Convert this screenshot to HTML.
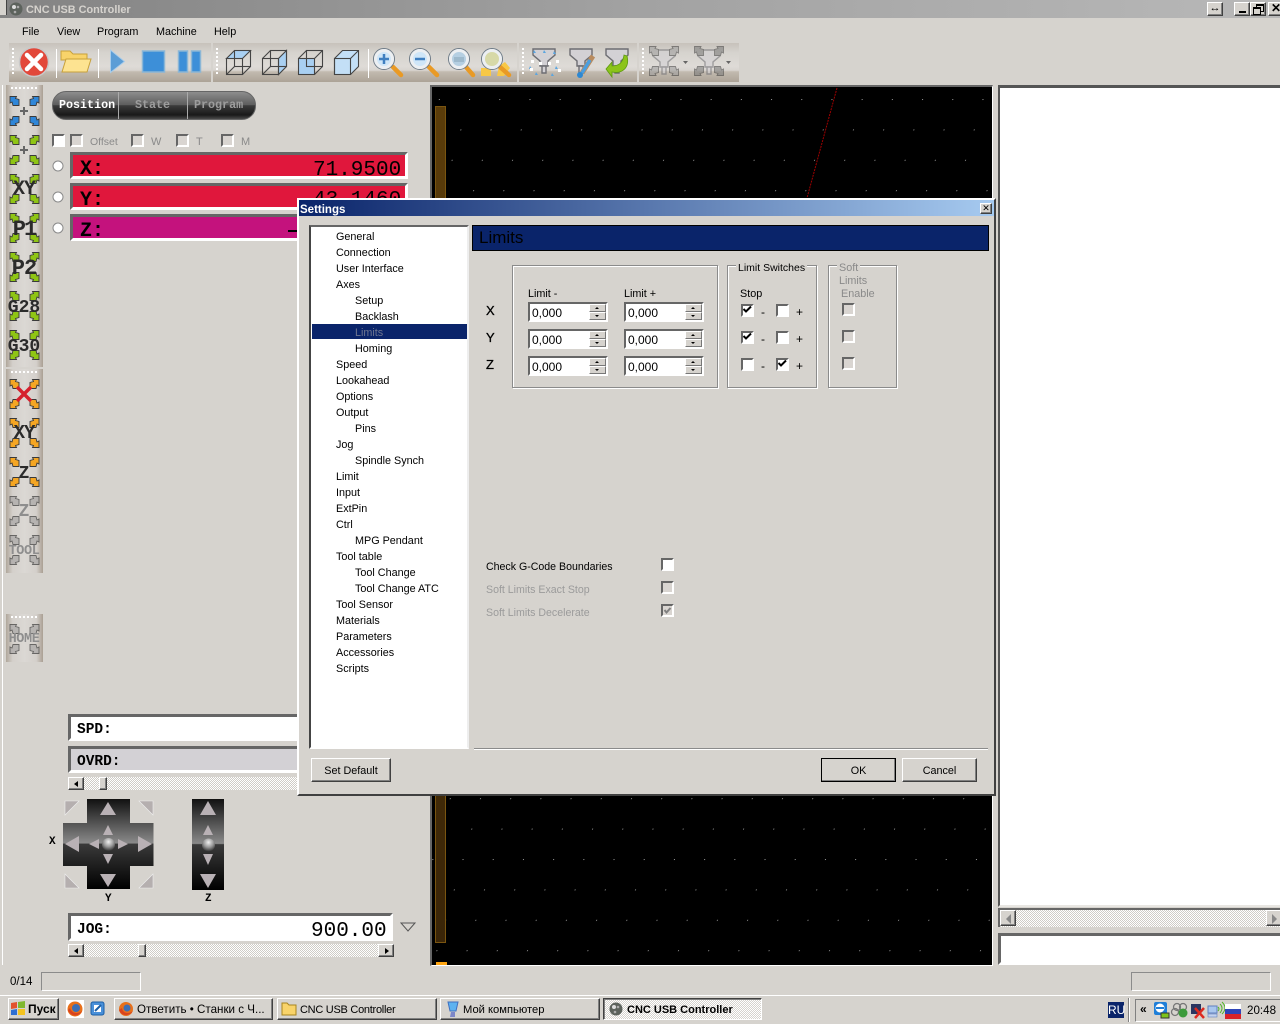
<!DOCTYPE html>
<html><head><meta charset="utf-8"><title>CNC USB Controller</title>
<style>
html,body{margin:0;padding:0}
body{width:1280px;height:1024px;overflow:hidden;position:relative;background:#d6d3ce;font:10.8px "Liberation Sans",sans-serif;color:#000}
div,span,svg{position:absolute}
.t{white-space:nowrap;line-height:14px}
.m{font-family:"Liberation Mono",monospace}
.b{font-weight:bold}
.g{color:#8a8a8a}
.w{left:0;top:1px}
.seg{background:linear-gradient(#c7c2bb 0,#d6d3ce 25%,#dedbd7 60%,#d8d4cf 70%,#c2baaf 74%,#aca397 100%)}
.vseg{background:linear-gradient(90deg,#b0a79b 0,#d4d0cb 18%,#dbd8d4 50%,#d4d0cb 82%,#aa9f93 100%)}
.ck{width:13px;height:13px;box-sizing:border-box;background:#fff;border:2px solid;border-color:#666 #fff #fff #666}
.ckd{background:#d9d5d1}
.fr{box-sizing:border-box;border:3px solid;border-color:#666 #fff #fff #666}
.sb{background:repeating-conic-gradient(#fff 0 25%,#cfccc6 0 50%) 0 0/2px 2px}
.btn{box-sizing:border-box;background:#d6d3ce;border:1px solid;border-color:#fff #404040 #404040 #fff;box-shadow:inset -1px -1px 0 #808080;text-align:center}
.gb{box-sizing:border-box;border:1px solid #8b8b8b;box-shadow:1px 1px 0 #fff,inset 1px 1px 0 #fff}
.sp{width:80px;height:20px;box-sizing:border-box;background:#fff;border:2px solid;border-color:#666 #fff #fff #666}
.sp i{position:absolute;right:0;width:15px;height:6px;background:#d6d3ce;border:1px solid;border-color:#fff #777 #777 #fff}
.sp i:before{content:"";position:absolute;left:5px;top:2px;border-left:2px solid transparent;border-right:2px solid transparent}
.sp i.u{top:0}.sp i.d{top:8px}
.sp i.u:before{border-bottom:2px solid #000}.sp i.d:before{border-top:2px solid #000}
.sp b{position:absolute;left:2px;top:2px;font-weight:normal;line-height:14px;font-size:12px}
.tb{box-sizing:border-box;height:22px;top:998px;background:#d6d3ce;border:1px solid;border-color:#fff #404040 #404040 #fff;box-shadow:inset -1px -1px 0 #808080}
</style></head><body>
<svg width="0" height="0" style="left:0;top:0"><defs>
<g id="arr"><path d="M.5 .5H7L6 2.500L9.500 3.500V9.500H3.500L2.500 6L.5 7Z"/></g>
<g id="ar4" stroke="#3a3a3a" stroke-width=".9"><use href="#arr" transform="translate(0 0)"/><use href="#arr" transform="translate(30 0) scale(-1 1)"/><use href="#arr" transform="translate(0 30) scale(1 -1)"/><use href="#arr" transform="translate(30 30) scale(-1 -1)"/></g>
<g id="tool" fill="#d3d1d5" stroke="#6d6d72" stroke-width="1.400"><path d="M0 0H22V6L15 12V17H7V12L0 6Z"/><path d="M9 17H13V24H9Z"/></g>
<pattern id="dots" width="30.2" height="30.4" patternUnits="userSpaceOnUse" patternTransform="translate(439 99) skewX(-16)"><rect width="1" height="1" fill="#9a9a9a"/></pattern>
<linearGradient id="jg" x1="0" y1="0" x2="0" y2="1"><stop offset="0" stop-color="#111"/><stop offset=".49" stop-color="#8a8a8a"/><stop offset=".5" stop-color="#3a3a3a"/><stop offset="1" stop-color="#000"/></linearGradient>
<linearGradient id="bar" x1="0" y1="0" x2="0" y2="1"><stop offset="0" stop-color="#5a3c0a"/><stop offset="1" stop-color="#3a2508"/></linearGradient>
<radialGradient id="ball" cx=".5" cy=".3" r=".75"><stop offset="0" stop-color="#f0f0f0"/><stop offset=".5" stop-color="#999"/><stop offset="1" stop-color="#222"/></radialGradient>
<g id="lens"><circle r="10.500" fill="none" stroke="#6f7c88" stroke-width="1"/><circle r="8.500" fill="none" stroke="#eceff2" stroke-width="3"/></g>
</defs></svg>

<!-- title bar -->
<div style="left:0;top:0;width:1280px;height:18px;background:linear-gradient(90deg,#838383,#a2a2a2 50%,#b8b8b8)"></div>
<div style="left:0;top:0;width:6px;height:15px;background:#d6d3ce;border-right:1px solid #444"></div>
<svg style="left:9px;top:2px" width="14" height="14"><circle cx="7" cy="7" r="6.500" fill="#5c625c"/><circle cx="5" cy="5" r="2" fill="#ddd"/><circle cx="9" cy="5" r="1.300" fill="#aaa"/><circle cx="6" cy="10" r="1.300" fill="#aaa"/></svg>
<div class="t b" style="left:26px;top:3px;color:#d6d3ce;font-size:10.900px">CNC USB Controller</div>
<div class="btn" style="left:1207px;top:2px;width:16px;height:14px;font-size:11px;line-height:11px">↔</div>
<div class="btn" style="left:1234px;top:2px;width:16px;height:14px"><div style="left:4px;top:8px;width:7px;height:2px;background:#000"></div></div>
<div class="btn" style="left:1250px;top:2px;width:16px;height:14px"><div style="left:5px;top:1px;width:6px;height:5px;border:1px solid #000;border-top-width:2px"></div><div style="left:2px;top:4px;width:6px;height:5px;border:1px solid #000;border-top-width:2px;background:#d6d3ce"></div></div>
<div class="btn" style="left:1268px;top:2px;width:16px;height:14px;font-size:12px;line-height:11px;font-weight:bold;text-align:left;padding-left:2px">✕</div>

<!-- menu -->
<div class="w">
<div class="t" style="left:22px;top:24px">File</div>
<div class="t" style="left:57px;top:24px">View</div>
<div class="t" style="left:97px;top:24px">Program</div>
<div class="t" style="left:156px;top:24px">Machine</div>
<div class="t" style="left:214px;top:24px">Help</div>
</div>

<!-- toolbars -->
<div class="seg" style="left:9px;top:43px;width:202px;height:39px"></div>
<div class="seg" style="left:213px;top:43px;width:304px;height:39px"></div>
<div class="seg" style="left:519px;top:43px;width:118px;height:39px"></div>
<div class="seg" style="left:639px;top:43px;width:100px;height:39px"></div>
<svg style="left:0;top:40px" width="760" height="45" viewBox="0 40 760 45">
<g fill="#fff"><path d="M12 48h2v2h-2zM12 52h2v2h-2zM12 56h2v2h-2zM12 60h2v2h-2zM12 64h2v2h-2zM12 68h2v2h-2zM12 72h2v2h-2z"/>
<path d="M216 48h2v2h-2zM216 52h2v2h-2zM216 56h2v2h-2zM216 60h2v2h-2zM216 64h2v2h-2zM216 68h2v2h-2zM216 72h2v2h-2z"/>
<path d="M522 48h2v2h-2zM522 52h2v2h-2zM522 56h2v2h-2zM522 60h2v2h-2zM522 64h2v2h-2zM522 68h2v2h-2zM522 72h2v2h-2z"/>
<path d="M642 48h2v2h-2zM642 52h2v2h-2zM642 56h2v2h-2zM642 60h2v2h-2zM642 64h2v2h-2zM642 68h2v2h-2zM642 72h2v2h-2z"/>
<rect x="56" y="49" width="1" height="29"/><rect x="98" y="49" width="1" height="29"/><rect x="368" y="49" width="1" height="29"/></g>
<circle cx="34" cy="62" r="14.500" fill="#e2483a" stroke="#c9c9c9" stroke-width="1.500"/>
<path d="M27 55 L41 69 M41 55 L27 69" stroke="#fff" stroke-width="4.500" stroke-linecap="round"/>
<path d="M61 51h9l3 3h14v6H61z" fill="#f8d36a" stroke="#c8a13a"/><path d="M62 72 L66 59H91L87 72Z" fill="#fde391" stroke="#c8a13a"/>
<path d="M110.500 50 L124.500 61.500 L110.500 72.500Z" fill="#5b9dd6" stroke="#a9cdeb"/>
<rect x="142.500" y="51" width="22" height="21" fill="#3d8fd8" stroke="#8ab6d6" stroke-width="1.500"/>
<rect x="178.500" y="51" width="9" height="21" fill="#3d8fd8" stroke="#8ab6d6" stroke-width="1.500"/>
<rect x="191.500" y="51" width="9" height="21" fill="#3d8fd8" stroke="#8ab6d6" stroke-width="1.500"/>
<g fill="none" stroke="#444" stroke-width="1.100">
<g transform="translate(226.500 50.500)"><path d="M0 8L8 0H24L16 8Z" fill="#a9d0f2"/><rect x="0" y="8" width="16" height="16"/><rect x="8" y="0" width="16" height="16"/><path d="M16 24L24 16M0 24L8 16"/></g>
<g transform="translate(262.500 50.500)"><path d="M16 8L24 0V16L16 24Z" fill="#a9d0f2"/><rect x="0" y="8" width="16" height="16"/><rect x="8" y="0" width="16" height="16"/><path d="M0 8L8 0M0 24L8 16"/></g>
<g transform="translate(298.500 50.500)"><rect x="0" y="8" width="16" height="16" fill="#a9d0f2"/><rect x="8" y="0" width="16" height="16"/><path d="M0 8L8 0M16 8L24 0M16 24L24 16"/></g>
<g transform="translate(334.500 50.500)"><path d="M0 8L8 0H24V16L16 24H0Z" fill="#c3dff6"/><rect x="0" y="8" width="16" height="16"/><path d="M16 8L24 0"/></g>
</g>
<path d="M393 67L401 75" stroke="#e99a25" stroke-width="4.500" stroke-linecap="round"/><circle cx="384" cy="59" r="9" fill="#cfe6f8"/><use href="#lens" x="384" y="59"/><path d="M379 59h10M384 54v10" stroke="#3f7fc0" stroke-width="2.500"/>
<path d="M429 67L437 75" stroke="#e99a25" stroke-width="4.500" stroke-linecap="round"/><circle cx="420" cy="59" r="9" fill="#cfe6f8"/><use href="#lens" x="420" y="59"/><path d="M415 59h10" stroke="#3f7fc0" stroke-width="2.500"/>
<path d="M466 67L473 75" stroke="#e99a25" stroke-width="4.500" stroke-linecap="round"/><circle cx="459" cy="59" r="9" fill="#b5cfe2"/><path d="M454 57h10v5h-10z" fill="#9db9cc"/><use href="#lens" x="459" y="59"/>
<path d="M481 68h10v8h-10zM499 66l6-4 5 6-6 8h-7z" fill="#f8c846"/><path d="M500 67L509 75" stroke="#e99a25" stroke-width="4.500" stroke-linecap="round"/><circle cx="492" cy="59" r="9" fill="#d7d9a8"/><use href="#lens" x="492" y="59"/>
<use href="#tool" x="533" y="49"/>
<g fill="#5aa5e0"><path d="M534 50l2 3h-3zM544 50l2 3h-3zM554 51l2 3h-3zM530 66l2 3h-3zM536 72l2 3h-3zM556 66l2 3h-3zM552 73l2 3h-3z"/></g>
<g fill="#fff"><rect x="531" y="60" width="3" height="3"/><rect x="556" y="60" width="3" height="3"/><rect x="539" y="62" width="3" height="3"/><rect x="548" y="62" width="3" height="3"/><rect x="530" y="68" width="3" height="3"/><rect x="558" y="69" width="3" height="3"/></g>
<use href="#tool" x="570" y="49"/>
<path d="M582 73L593 56" stroke="#b98b5e" stroke-width="5"/><path d="M582 73L590 60" stroke="#4a9ee0" stroke-width="3.500"/><circle cx="580" cy="75" r="3" fill="#2d88d2"/>
<use href="#tool" x="606" y="49"/>
<path d="M627 56C630 68 622 74 612 72V77L606 69L612 62V66C618 66 623 63 624 55Z" fill="#8cc41a" stroke="#5d9a10" stroke-width=".8"/>
<g opacity=".55"><use href="#tool" x="653" y="50"/><use href="#ar4" x="649" y="46" fill="#9c9c9c"/>
<use href="#tool" x="698" y="50"/><use href="#ar4" x="694" y="46" fill="#777"/></g>
<path d="M683 61h5l-2.500 3zM726 61h5l-2.500 3z" fill="#666"/>
</svg>

<!-- vertical toolbars -->
<div class="vseg" style="left:6px;top:85px;width:37px;height:282px"></div>
<div class="vseg" style="left:6px;top:369px;width:37px;height:204px"></div>
<div class="vseg" style="left:6px;top:614px;width:37px;height:48px"></div>
<svg style="left:0;top:85px" width="50" height="580" viewBox="0 85 50 580">
<g fill="#fff"><path d="M11 87h2v2h-2zM15 87h2v2h-2zM19 87h2v2h-2zM23 87h2v2h-2zM27 87h2v2h-2zM31 87h2v2h-2zM35 87h2v2h-2z"/><path d="M11 371h2v2h-2zM15 371h2v2h-2zM19 371h2v2h-2zM23 371h2v2h-2zM27 371h2v2h-2zM31 371h2v2h-2zM35 371h2v2h-2z"/><path d="M11 616h2v2h-2zM15 616h2v2h-2zM19 616h2v2h-2zM23 616h2v2h-2zM27 616h2v2h-2zM31 616h2v2h-2zM35 616h2v2h-2z"/></g>
<use href="#ar4" x="9.500" y="96" fill="#2f86d8"/>
<use href="#ar4" x="9.500" y="135" fill="#8fc514"/>
<use href="#ar4" x="9.500" y="174" fill="#8fc514"/>
<use href="#ar4" x="9.500" y="213" fill="#8fc514"/>
<use href="#ar4" x="9.500" y="252" fill="#8fc514"/>
<use href="#ar4" x="9.500" y="291" fill="#8fc514"/>
<use href="#ar4" x="9.500" y="330" fill="#8fc514"/>
<use href="#ar4" x="9.500" y="379" fill="#f5a623"/>
<use href="#ar4" x="9.500" y="418" fill="#f5a623"/>
<use href="#ar4" x="9.500" y="457" fill="#f5a623"/>
<use href="#ar4" x="9.500" y="496" fill="#a9a7a6" opacity=".7"/>
<use href="#ar4" x="9.500" y="535" fill="#a9a7a6" opacity=".7"/>
<use href="#ar4" x="9.500" y="624" fill="#a9a7a6" opacity=".7"/>
<path d="M20 111h8M24 107v8M20 150h8M24 146v8" stroke="#666" stroke-width="2"/>
<path d="M17 387L31 401M31 387L17 401" stroke="#d5202c" stroke-width="3.500"/>
<g font-family="Liberation Mono,monospace" font-weight="bold" text-anchor="middle" fill="#2b2b2b">
<text x="24" y="194" font-size="20" letter-spacing="-1">XY</text>
<text x="24" y="235" font-size="22" letter-spacing="-2">P1</text>
<text x="24" y="274" font-size="22" letter-spacing="-1">P2</text>
<text x="24" y="312" font-size="18">G28</text>
<text x="24" y="351" font-size="18">G30</text>
<text x="24" y="438" font-size="19" letter-spacing="-1">XY</text>
<text x="24" y="478" font-size="18">Z</text>
<text x="24" y="516" font-size="18" fill="#8e8e8e">Z</text>
<text x="24" y="554" font-size="13.500" fill="#8e8e8e" letter-spacing="-.4">TOOL</text>
<text x="24" y="642" font-size="13.500" fill="#8e8e8e" letter-spacing="-.4">HOME</text>
</g></svg>

<div style="left:2px;top:85px;width:1px;height:880px;background:#fff"></div>

<!-- tabs -->
<div style="left:52px;top:91px;width:204px;height:29px;box-sizing:border-box;border-radius:14px;border:1px solid #666;background:linear-gradient(#8d8d8d 0,#5d5d5d 48%,#3b3b3b 50%,#191919 85%,#4a4a4a 100%)"></div>
<div style="left:118px;top:92px;width:1px;height:27px;background:#aaa"></div>
<div style="left:187px;top:92px;width:1px;height:27px;background:#aaa"></div>
<div class="t m b" style="left:59px;top:98px;font-size:11.700px;color:#fff">Position</div>
<div class="t m b" style="left:135px;top:98px;font-size:11.700px;color:#9d9d9d">State</div>
<div class="t m b" style="left:194px;top:98px;font-size:11.700px;color:#9d9d9d">Program</div>

<!-- option row -->
<div class="ck" style="left:52px;top:134px"></div>
<div class="ck ckd" style="left:70px;top:134px"></div><div class="t g" style="left:90px;top:135px;font-size:10.500px">Offset</div>
<div class="ck ckd" style="left:131px;top:134px"></div><div class="t g" style="left:151px;top:135px;font-size:11px">W</div>
<div class="ck ckd" style="left:176px;top:134px"></div><div class="t g" style="left:196px;top:135px;font-size:11px">T</div>
<div class="ck ckd" style="left:221px;top:134px"></div><div class="t g" style="left:241px;top:135px;font-size:11px">M</div>

<!-- radios -->
<svg style="left:50px;top:155px" width="16" height="85"><g fill="#fff" stroke="#8a8a8a"><circle cx="8" cy="11" r="5"/><circle cx="8" cy="42" r="5"/><circle cx="8" cy="73" r="5"/></g></svg>

<!-- DRO -->
<div class="fr" style="left:70px;top:152px;width:338px;height:27px;background:#e0173c"></div>
<div class="t m b" style="left:80px;top:163px;font-size:20px">X:</div>
<div class="t m" style="left:313px;top:164px;font-size:21px">71.9500</div>
<div class="fr" style="left:70px;top:183px;width:338px;height:27px;background:#e0173c"></div>
<div class="t m b" style="left:80px;top:194px;font-size:20px">Y:</div>
<div class="t m" style="left:313px;top:194px;font-size:21px">43.1460</div>
<div class="fr" style="left:70px;top:214px;width:338px;height:27px;background:#c4127d"></div>
<div class="t m b" style="left:80px;top:225px;font-size:20px">Z:</div>
<div style="left:288px;top:230px;width:9px;height:2px;background:#000"></div>

<!-- SPD, OVRD -->
<div class="fr" style="left:68px;top:714px;width:240px;height:27px;background:#fff"></div>
<div class="t m b" style="left:77px;top:723px;font-size:14.500px">SPD:</div>
<div class="fr" style="left:68px;top:746px;width:240px;height:27px;background:#d3d1d5"></div>
<div class="t m b" style="left:77px;top:755px;font-size:14.500px">OVRD:</div>
<div class="sb" style="left:68px;top:777px;width:240px;height:13px"></div>
<div class="btn" style="left:68px;top:777px;width:16px;height:13px"><div style="left:5px;top:3px;border-right:4px solid #000;border-top:3px solid transparent;border-bottom:3px solid transparent"></div></div>
<div class="btn" style="left:99px;top:777px;width:8px;height:13px"></div>

<!-- jog pads -->
<svg style="left:60px;top:796px" width="170" height="98" viewBox="60 796 170 98">
<path d="M87 799H130V823H153.500V866H130V889H87V866H63V823H87Z" fill="url(#jg)"/>
<rect x="192" y="799" width="32" height="91" fill="url(#jg)"/>
<g fill="#b9b1b5">
<path d="M108 802L116 815H100ZM108 887L116 874H100ZM65 844L79 836V852ZM152 844L138 836V852Z"/>
<path d="M108 825L113 835H103ZM108 864L113 854H103ZM89 844L99 839V849ZM128 844L118 839V849Z"/>
<path d="M208 801L216 815H200ZM208 825L213 835H203ZM208 888L216 874H200ZM208 865L213 854H203Z"/>
</g>
<circle cx="108.500" cy="844.500" r="6.500" fill="url(#ball)"/><circle cx="208.500" cy="845" r="6.500" fill="url(#ball)"/>
<g fill="#b5afaf" stroke="#eee" stroke-width=".6"><path d="M65 801H79L65 815ZM153 801H139L153 815ZM65 888H79L65 874ZM153 888H139L153 874Z"/></g>
</svg>
<div class="t m b" style="left:49px;top:835px;font-size:11px">X</div>
<div class="t m b" style="left:105px;top:892px;font-size:11px">Y</div>
<div class="t m b" style="left:205px;top:892px;font-size:11px">Z</div>

<!-- JOG -->
<div class="fr" style="left:68px;top:913px;width:325px;height:28px;background:#fff"></div>
<div class="t m b" style="left:77px;top:923px;font-size:14.500px">JOG:</div>
<div class="t m" style="left:311px;top:925px;font-size:21px">900.00</div>
<svg style="left:400px;top:922px" width="16" height="11"><path d="M1 1H15L8 9Z" fill="#d6d3ce" stroke="#555"/></svg>
<div class="sb" style="left:68px;top:944px;width:326px;height:13px"></div>
<div class="btn" style="left:68px;top:944px;width:16px;height:13px"><div style="left:5px;top:3px;border-right:4px solid #000;border-top:3px solid transparent;border-bottom:3px solid transparent"></div></div>
<div class="btn" style="left:138px;top:944px;width:8px;height:13px"></div>
<div class="btn" style="left:378px;top:944px;width:16px;height:13px"><div style="left:6px;top:3px;border-left:4px solid #000;border-top:3px solid transparent;border-bottom:3px solid transparent"></div></div>

<!-- canvas -->
<div style="left:430px;top:85px;width:563px;height:881px;box-sizing:border-box;background:#000;border-style:solid;border-width:2px 1px 1px 2px;border-color:#666 #fff #fff #666"></div>
<svg style="left:432px;top:87px" width="560" height="878" viewBox="432 87 560 878">
<rect x="432" y="87" width="560" height="878" fill="url(#dots)"/>
<rect x="435.500" y="106.500" width="10" height="836" fill="url(#bar)" stroke="#7a5510"/>
<rect x="436" y="962" width="11" height="3" fill="#ffa511"/>
<path d="M837 88L807 198" stroke="#a00000" stroke-width="1" stroke-dasharray="2 1"/>
</svg>

<!-- right panel -->
<div style="left:998px;top:85px;width:282px;height:822px;box-sizing:border-box;background:#fff;border-style:solid;border-width:3px 0 2px 2px;border-color:#555 #fff #e8e6e2 #555"></div>
<div style="left:998px;top:908px;width:282px;height:19px;box-sizing:border-box;border-top:2px solid #666;border-left:2px solid #666"></div>
<div class="sb" style="left:1000px;top:910px;width:280px;height:17px"></div>
<div class="btn" style="left:1000px;top:910px;width:16px;height:16px"><div style="left:5px;top:3px;border-right:5px solid #888;border-top:5px solid transparent;border-bottom:5px solid transparent"></div></div>
<div class="btn" style="left:1266px;top:910px;width:16px;height:16px"><div style="left:5px;top:3px;border-left:5px solid #888;border-top:5px solid transparent;border-bottom:5px solid transparent"></div></div>
<div class="fr" style="left:998px;top:933px;width:285px;height:32px;background:#fff"></div>

<!-- dialog -->
<div style="left:297px;top:198px;width:699px;height:598px;box-sizing:border-box;background:#d6d3ce;border:2px solid;border-color:#fff #404040 #404040 #fff"></div>
<div style="left:299px;top:200px;width:695px;height:16px;background:linear-gradient(90deg,#0a246a,#a6caf0)"></div>
<div class="t b" style="left:300px;top:203px;color:#fff;font-size:11.500px">Settings</div>
<div class="btn" style="left:980px;top:203px;width:12px;height:11px;font-size:9px;line-height:8px">✕</div>

<!-- tree -->
<div style="left:309px;top:225px;width:160px;height:524px;box-sizing:border-box;background:#fff;border:2px solid;border-color:#666 #eee #fff #444"></div>
<div style="left:312px;top:324px;width:155px;height:15px;background:#0a246a"></div>
<div class="w">
<div class="t" style="left:336px;top:229px">General</div>
<div class="t" style="left:336px;top:245px">Connection</div>
<div class="t" style="left:336px;top:261px">User Interface</div>
<div class="t" style="left:336px;top:277px">Axes</div>
<div class="t" style="left:355px;top:293px">Setup</div>
<div class="t" style="left:355px;top:309px">Backlash</div>
<div class="t" style="left:355px;top:325px;color:#6e7590">Limits</div>
<div class="t" style="left:355px;top:341px">Homing</div>
<div class="t" style="left:336px;top:357px">Speed</div>
<div class="t" style="left:336px;top:373px">Lookahead</div>
<div class="t" style="left:336px;top:389px">Options</div>
<div class="t" style="left:336px;top:405px">Output</div>
<div class="t" style="left:355px;top:421px">Pins</div>
<div class="t" style="left:336px;top:437px">Jog</div>
<div class="t" style="left:355px;top:453px">Spindle Synch</div>
<div class="t" style="left:336px;top:469px">Limit</div>
<div class="t" style="left:336px;top:485px">Input</div>
<div class="t" style="left:336px;top:501px">ExtPin</div>
<div class="t" style="left:336px;top:517px">Ctrl</div>
<div class="t" style="left:355px;top:533px">MPG Pendant</div>
<div class="t" style="left:336px;top:549px">Tool table</div>
<div class="t" style="left:355px;top:565px">Tool Change</div>
<div class="t" style="left:355px;top:581px">Tool Change ATC</div>
<div class="t" style="left:336px;top:597px">Tool Sensor</div>
<div class="t" style="left:336px;top:613px">Materials</div>
<div class="t" style="left:336px;top:629px">Parameters</div>
<div class="t" style="left:336px;top:645px">Accessories</div>
<div class="t" style="left:336px;top:661px">Scripts</div>
</div>

<!-- header -->
<div style="left:472px;top:225px;width:517px;height:26px;box-sizing:border-box;background:#0a246a;border:1px solid #000"></div>
<div class="t" style="left:479px;top:230px;font-size:17px;line-height:16px;color:#000">Limits</div>

<!-- groups -->
<div class="gb" style="left:512px;top:265px;width:206px;height:123px"></div>
<div class="gb" style="left:727px;top:265px;width:90px;height:123px"></div>
<div class="gb" style="left:828px;top:265px;width:69px;height:123px"></div>
<div class="w">
<div class="t" style="left:736px;top:260px;background:#d6d3ce;padding:0 2px;font-size:10.500px">Limit Switches</div>
<div class="t g" style="left:837px;top:260px;background:#d6d3ce;padding:0 2px">Soft</div>
<div class="t g" style="left:839px;top:273px">Limits</div>
<div class="t g" style="left:841px;top:286px">Enable</div>
<div class="t" style="left:528px;top:286px">Limit -</div>
<div class="t" style="left:624px;top:286px">Limit +</div>
<div class="t" style="left:740px;top:286px">Stop</div>
</div>
<div class="t" style="left:486px;top:304px;font-size:13px;-webkit-text-stroke:.3px #000">X</div>
<div class="t" style="left:486px;top:331px;font-size:13px;-webkit-text-stroke:.3px #000">Y</div>
<div class="t" style="left:486px;top:358px;font-size:13px;-webkit-text-stroke:.3px #000">Z</div>

<div class="sp" style="left:528px;top:302px"><b>0,000</b><i class="u"></i><i class="d"></i></div>
<div class="sp" style="left:624px;top:302px"><b>0,000</b><i class="u"></i><i class="d"></i></div>
<div class="sp" style="left:528px;top:329px"><b>0,000</b><i class="u"></i><i class="d"></i></div>
<div class="sp" style="left:624px;top:329px"><b>0,000</b><i class="u"></i><i class="d"></i></div>
<div class="sp" style="left:528px;top:356px"><b>0,000</b><i class="u"></i><i class="d"></i></div>
<div class="sp" style="left:624px;top:356px"><b>0,000</b><i class="u"></i><i class="d"></i></div>

<div class="ck" style="left:741px;top:304px"></div><div class="ck" style="left:776px;top:304px"></div>
<div class="ck" style="left:741px;top:331px"></div><div class="ck" style="left:776px;top:331px"></div>
<div class="ck" style="left:741px;top:358px"></div><div class="ck" style="left:776px;top:358px"></div>
<div class="ck ckd" style="left:842px;top:303px"></div>
<div class="ck ckd" style="left:842px;top:330px"></div>
<div class="ck ckd" style="left:842px;top:357px"></div>
<svg style="left:735px;top:300px" width="60" height="70"><g fill="none" stroke="#000" stroke-width="2"><path d="M8.500 9L11 11.500L16 6.500"/><path d="M8.500 36L11 38.500L16 33.500"/><path d="M43.500 63L46 65.500L51 60.500"/></g></svg>
<div class="t" style="left:761px;top:305px;font-size:12px">-</div><div class="t" style="left:796px;top:305px;font-size:12px">+</div>
<div class="t" style="left:761px;top:332px;font-size:12px">-</div><div class="t" style="left:796px;top:332px;font-size:12px">+</div>
<div class="t" style="left:761px;top:359px;font-size:12px">-</div><div class="t" style="left:796px;top:359px;font-size:12px">+</div>

<div class="w">
<div class="t" style="left:486px;top:559px;font-size:10.600px">Check G-Code Boundaries</div>
<div class="t g" style="left:486px;top:582px;color:#9b9b9b;font-size:10.600px">Soft Limits Exact Stop</div>
<div class="t g" style="left:486px;top:605px;color:#9b9b9b;font-size:10.600px">Soft Limits Decelerate</div>
</div>
<div class="ck" style="left:661px;top:558px"></div>
<div class="ck ckd" style="left:661px;top:581px"></div>
<div class="ck ckd" style="left:661px;top:604px"></div>
<svg style="left:661px;top:604px" width="13" height="13"><path d="M3.500 6L5.500 8.500L9.500 4" fill="none" stroke="#808080" stroke-width="2"/></svg>

<!-- dialog bottom -->
<div style="left:474px;top:748px;width:514px;height:1px;background:#8b8b8b;box-shadow:0 1px 0 #fff"></div>
<div class="btn t" style="left:311px;top:758px;width:80px;height:24px;line-height:25px">Set Default</div>
<div class="btn t" style="left:821px;top:758px;width:75px;height:24px;line-height:25px;outline:1px solid #000;outline-offset:-1px">OK</div>
<div class="btn t" style="left:902px;top:758px;width:75px;height:24px;line-height:25px">Cancel</div>

<!-- status -->
<div class="t" style="left:10px;top:975px;font-size:11.500px">0/14</div>
<div style="left:41px;top:972px;width:100px;height:19px;box-sizing:border-box;border:1px solid;border-color:#8b8b8b #fff #fff #8b8b8b"></div>
<div style="left:1131px;top:972px;width:140px;height:19px;box-sizing:border-box;border:1px solid;border-color:#8b8b8b #fff #fff #8b8b8b"></div>

<!-- taskbar -->
<div style="left:0;top:995px;width:1280px;height:1px;background:#fff"></div>
<div class="tb" style="left:8px;width:51px"></div>
<svg style="left:10px;top:1001px" width="16" height="15"><path d="M1 2L7 1V7L1 8Z" fill="#e2522c"/><path d="M8 1L15 0V7L8 7Z" fill="#7fb82f"/><path d="M1 9L7 8V14L1 14Z" fill="#2f6fd2"/><path d="M8 8H15V14L8 14Z" fill="#f3c21f"/></svg>
<div class="t b" style="left:28px;top:1002px;font-size:12px">Пуск</div>
<svg style="left:66px;top:1000px" width="18" height="18"><rect width="18" height="18" fill="#fff"/><circle cx="9" cy="9" r="7.500" fill="#e8701a"/><circle cx="10" cy="8" r="4" fill="#3d6fb5"/><path d="M2 10C4 16 12 18 16 11C12 14 6 14 4 8Z" fill="#d9431e"/></svg>
<svg style="left:89px;top:1000px" width="17" height="17"><rect x="2" y="2" width="13" height="13" rx="2" fill="#4a90d9" stroke="#1b5fa6"/><path d="M5 5h7v7H5z" fill="#fff"/><path d="M6 11L12 5" stroke="#1b5fa6" stroke-width="2"/></svg>
<div class="tb" style="left:114px;width:159px"></div>
<svg style="left:118px;top:1001px" width="16" height="16"><circle cx="8" cy="8" r="7" fill="#e8701a"/><circle cx="9" cy="7" r="3.500" fill="#3d6fb5"/><path d="M1 9C3 15 11 16 15 10C11 13 5 13 4 7Z" fill="#d9431e"/></svg>
<div class="t" style="left:137px;top:1003px;font-size:11.600px">Ответить • Станки с Ч...</div>
<div class="tb" style="left:277px;width:160px"></div>
<svg style="left:281px;top:1002px" width="16" height="14"><path d="M1 1h5l2 2h7v10H1z" fill="#f8d36a" stroke="#a8851f"/></svg>
<div class="t" style="left:300px;top:1003px;font-size:11px;letter-spacing:-.27px">CNC USB Controller</div>
<div class="tb" style="left:440px;width:160px"></div>
<svg style="left:446px;top:1001px" width="14" height="17"><path d="M2 1H12L10 10H4Z" fill="#5db2f0" stroke="#3f6fc0"/><path d="M5 11H9V16H4Z" fill="#7c86c8"/></svg>
<div class="t" style="left:463px;top:1003px;font-size:11.200px">Мой компьютер</div>
<div class="tb" style="left:603px;width:159px;border-color:#404040 #fff #fff #404040;box-shadow:inset 1px 1px 0 #808080;background:repeating-conic-gradient(#fff 0 25%,#d6d3ce 0 50%) 0 0/2px 2px"></div>
<svg style="left:609px;top:1002px" width="14" height="14"><circle cx="7" cy="7" r="6.500" fill="#5c625c"/><circle cx="5" cy="5" r="2" fill="#ddd"/><circle cx="9" cy="5" r="1.300" fill="#aaa"/><circle cx="6" cy="10" r="1.300" fill="#aaa"/></svg>
<div class="t b" style="left:627px;top:1003px;font-size:11px">CNC USB Controller</div>

<!-- tray -->
<div class="t" style="left:1108px;top:1002px;width:16px;height:16px;background:#0a246a;color:#fff;text-align:center;line-height:16px;font-size:12px">RU</div>
<div style="left:1128px;top:998px;width:1px;height:24px;background:#808080;box-shadow:1px 0 0 #fff"></div>
<div style="left:1135px;top:999px;width:146px;height:23px;box-sizing:border-box;border:1px solid;border-color:#808080 #d6d3ce #fff #808080"></div>
<div class="t b" style="left:1140px;top:1002px;font-size:12px">«</div>
<svg style="left:1153px;top:1001px" width="90" height="18">
<rect x="1" y="1" width="13" height="13" rx="2" fill="#1f7fd8"/><circle cx="7" cy="7" r="4.500" fill="#fff"/><path d="M3 7h8" stroke="#1f7fd8" stroke-width="2"/><rect x="8" y="12" width="8" height="5" fill="#7dc31b" stroke="#333"/>
<g fill="none" stroke="#777" stroke-width="1.300"><circle cx="24" cy="6" r="3.500"/><circle cx="30" cy="6" r="3.500"/><circle cx="22" cy="11" r="3.500"/></g><circle cx="30" cy="12" r="4.500" fill="#3c9a3a"/>
<rect x="38" y="3" width="10" height="10" fill="#2a3560"/><path d="M42 7L51 17M51 7L42 17" stroke="#dd2a20" stroke-width="2.500"/>
<rect x="55" y="5" width="9" height="7" fill="#a9c6ee" stroke="#6080c0"/><rect x="55" y="13" width="9" height="3" fill="#c4d2ee" stroke="#6080c0" stroke-width=".6"/><path d="M65 6q2 2 0 4M67 3q4 4 0 9M69 1q6 6 0 12" fill="none" stroke="#52b52a"/>
<rect x="72" y="3" width="16" height="5" fill="#fff"/><rect x="72" y="8" width="16" height="5" fill="#2f45b8"/><rect x="72" y="13" width="16" height="5" fill="#d8232a"/>
</svg>
<div class="t" style="left:1247px;top:1004px;font-size:11.600px">20:48</div>
</body></html>
